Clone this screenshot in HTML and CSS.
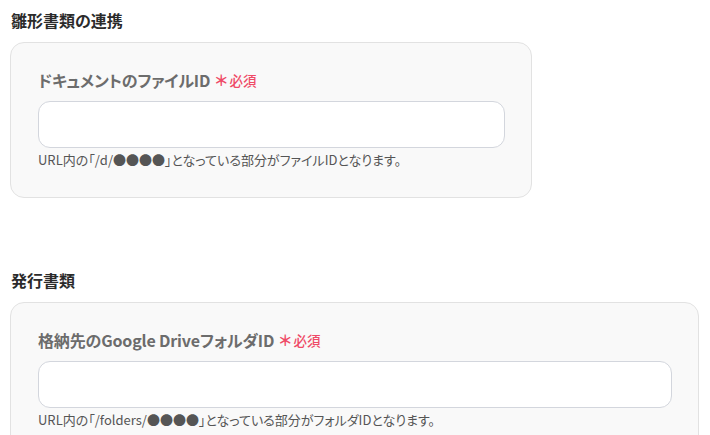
FILE: index.html
```html
<!DOCTYPE html>
<html lang="ja">
<head>
<meta charset="utf-8">
<title>設定</title>
<link rel="stylesheet" href="styles.css">
</head>
<body>
<div class="page">
  <section class="section section-narrow">
    <h2 class="section-title">雛形書類の連携</h2>
    <div class="card">
      <div class="field-label">ドキュメントのファイルID<span class="req"><span class="ast">＊</span>必須</span></div>
      <div class="input"></div>
      <p class="help">URL内の「/d/●●●●」となっている部分がファイルIDとなります。</p>
    </div>
  </section>
  <section class="section section-wide">
    <h2 class="section-title">発行書類</h2>
    <div class="card">
      <div class="field-label">格納先のGoogle DriveフォルダID<span class="req"><span class="ast">＊</span>必須</span></div>
      <div class="input"></div>
      <p class="help">URL内の「/folders/●●●●」となっている部分がフォルダIDとなります。</p>
    </div>
  </section>
</div>
</body>
</html>
```
FILE: styles.css
```css
* { box-sizing: border-box; }
html, body { margin: 0; padding: 0; background: #fff; }
body {
  font-family: "Noto Sans CJK JP", sans-serif;
  font-feature-settings: "palt";
  color: #2b2b2b;
  overflow: hidden;
}
.page {
  padding: 8px 0 0 10px;
  display: flex;
  flex-direction: column;
  gap: 70px;
}
.section-narrow { width: 522px; }
.section-wide { width: 689px; }
.section-title {
  margin: 0 0 10px 1px;
  font-size: 16px;
  line-height: 24px;
  font-weight: 700;
  color: #2b2b2b;
}
.card {
  background: #f9f9f9;
  border: 1px solid #e2e2e2;
  border-radius: 14px;
  padding: 25px 26px 27px 27px;
}
.field-label {
  font-size: 16px;
  line-height: 24px;
  font-weight: 700;
  color: #6c6c6c;
  display: flex;
  align-items: center;
  white-space: nowrap;
  letter-spacing: -0.01em;
}
.req {
  color: #ef4a67;
  font-size: 13.5px;
  font-weight: 500;
  margin-left: 5px;
  display: inline-flex;
  align-items: center;
  letter-spacing: 0;
}
.ast {
  font-size: 15px;
  font-weight: 700;
  margin-right: 2px;
}
.input {
  margin-top: 9px;
  height: 47px;
  background: #fff;
  border: 1px solid #d3d6dd;
  border-radius: 12px;
}
.help {
  margin: 2px 0 0 0;
  font-size: 13px;
  line-height: 20px;
  color: #555;
  white-space: nowrap;
}
```
